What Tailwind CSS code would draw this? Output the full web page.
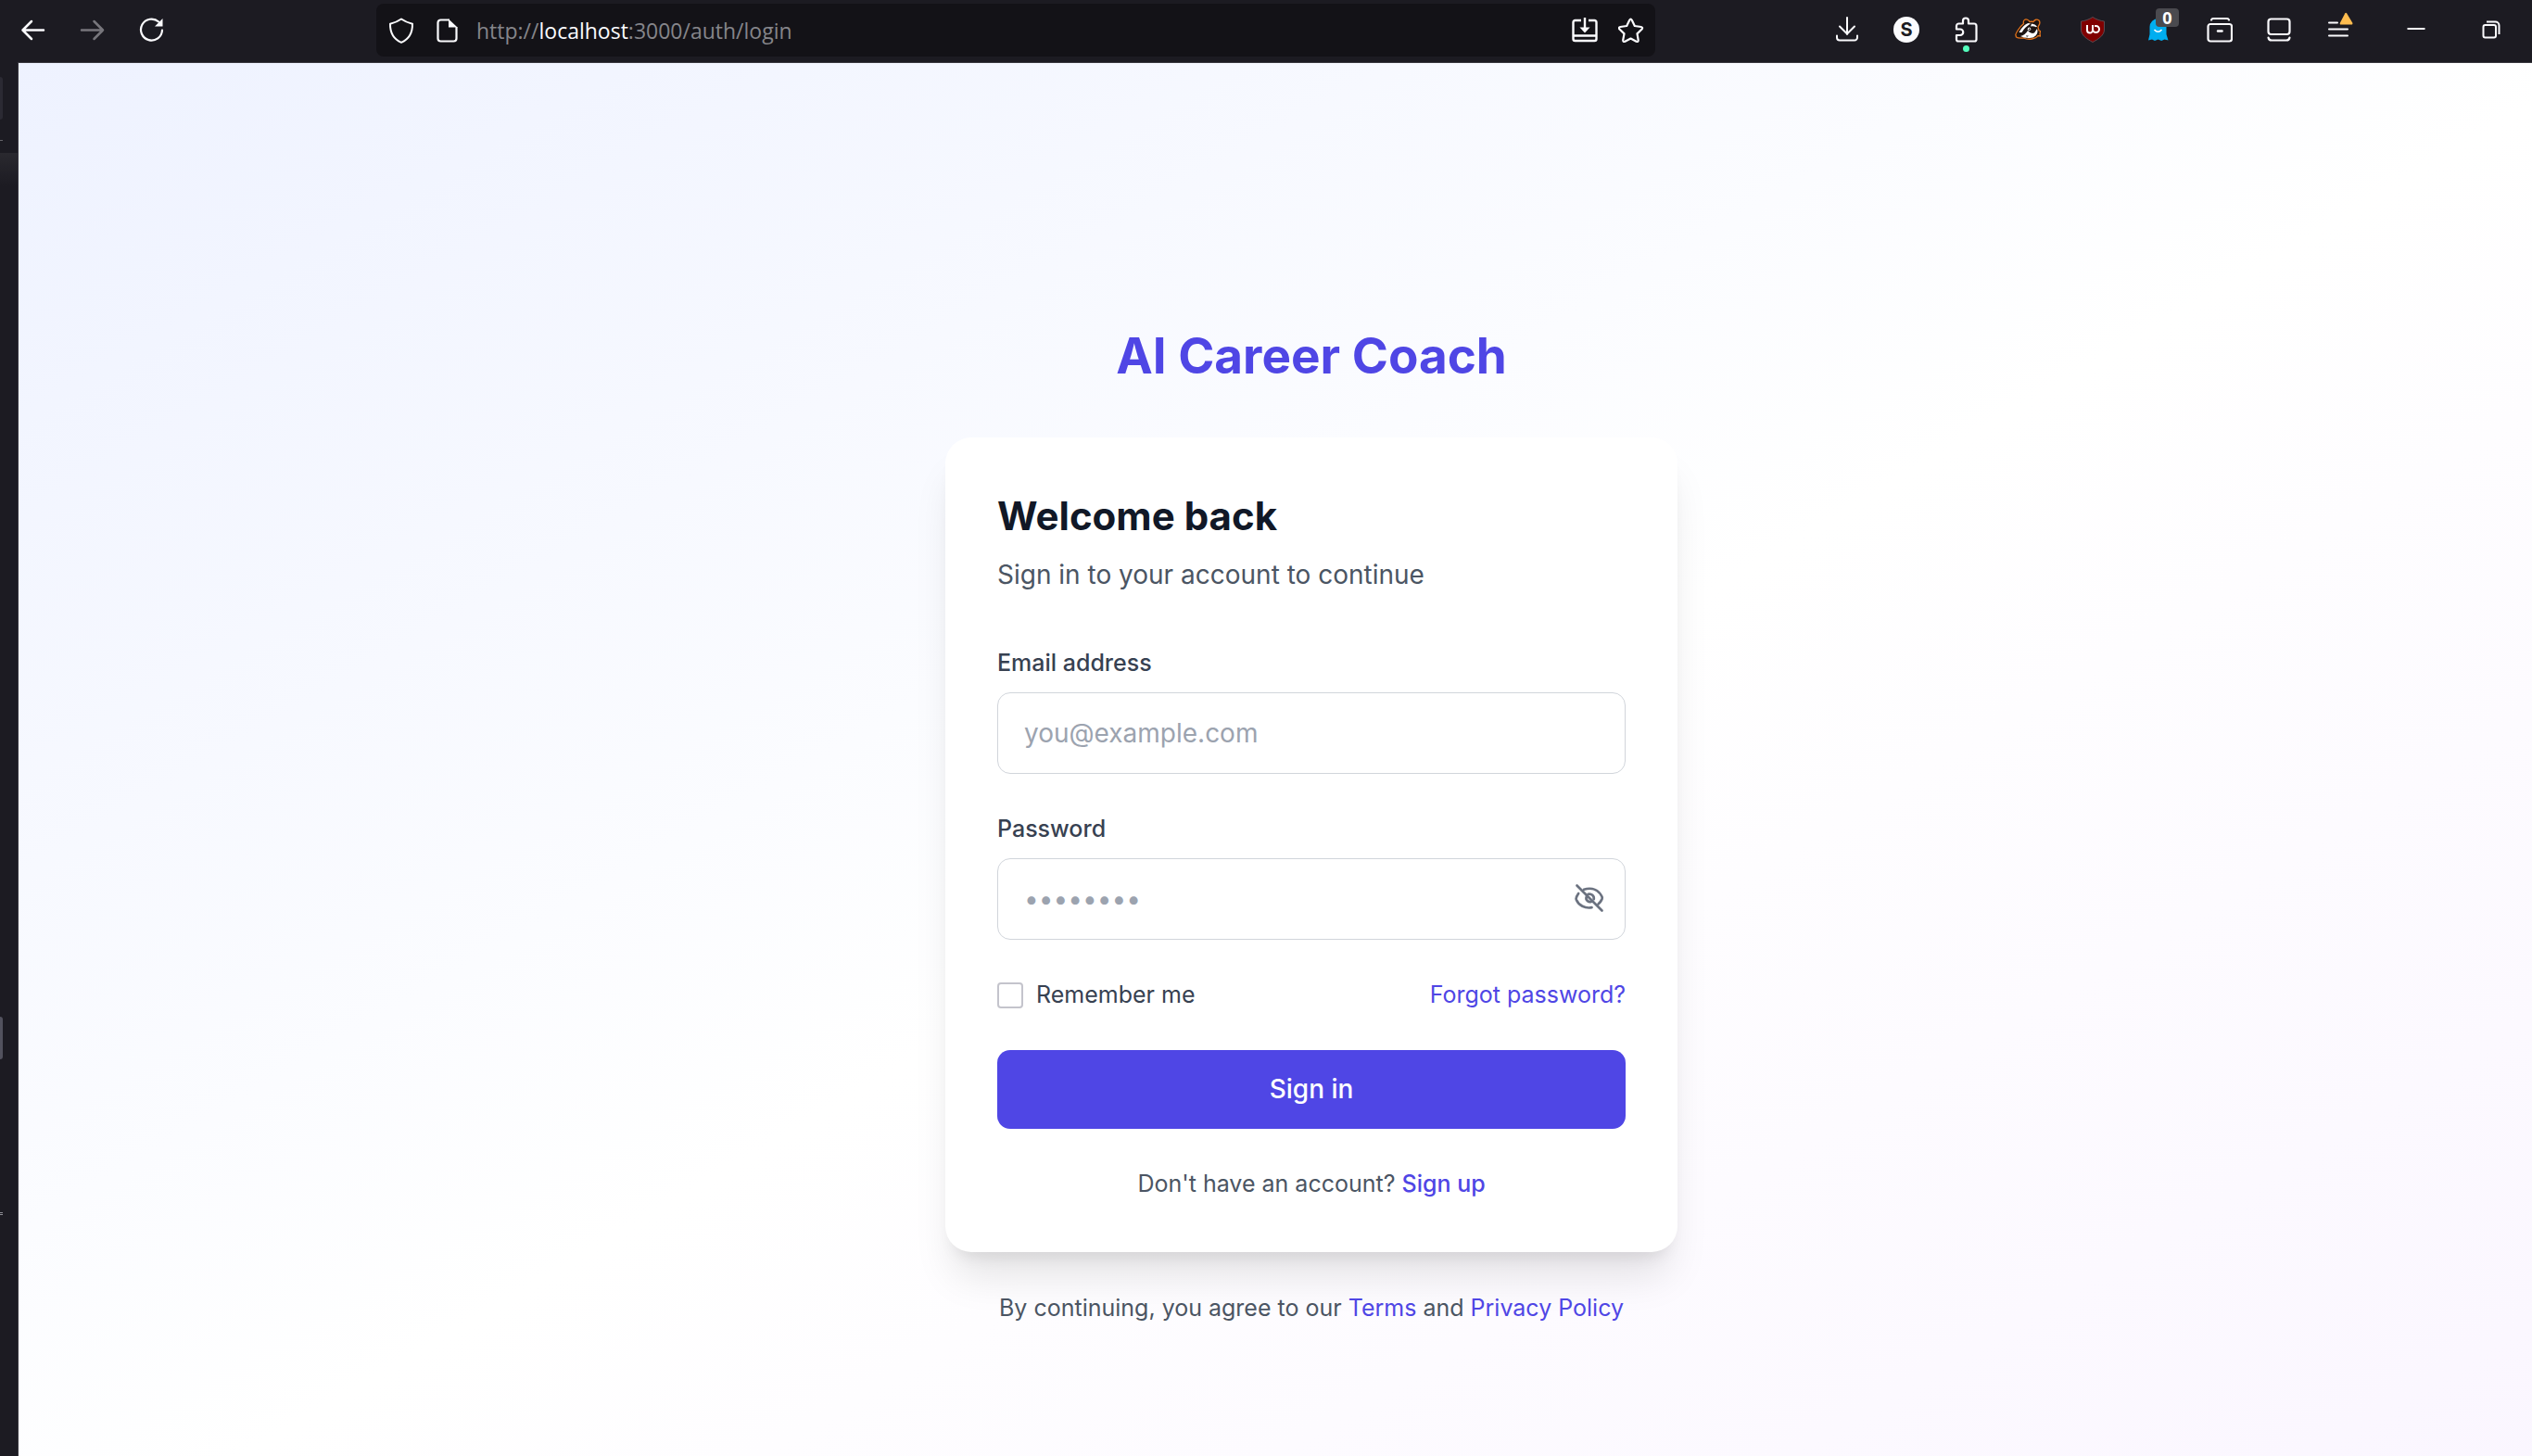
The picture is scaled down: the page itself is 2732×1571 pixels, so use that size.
<!DOCTYPE html>
<html lang="en">
<head>
<meta charset="utf-8">
<title>AI Career Coach - Sign in</title>
<script src="https://cdn.jsdelivr.net/npm/@tailwindcss/browser@4"></script>
</head>
<body class="flex h-screen flex-col overflow-hidden bg-[#1c1b22] font-['Inter',sans-serif]">

<header class="flex h-[67px] shrink-0 items-start pr-1 pl-1 text-[#fbfbfe]">
  <nav class="flex" aria-label="Browser navigation">
    <button class="flex h-16 w-16 items-center justify-center" aria-label="Back">
      <svg class="size-7" viewBox="0 0 28 28" fill="none" stroke="currentColor" stroke-width="2.500" stroke-linecap="round" stroke-linejoin="round"><path d="M25 14.500H3M12 5L2.500 14.500l9.500 9.500"/></svg>
    </button>
    <button class="flex h-16 w-16 items-center justify-center text-[#77767c]" aria-label="Forward">
      <svg class="size-7" viewBox="0 0 28 28" fill="none" stroke="currentColor" stroke-width="2.500" stroke-linecap="round" stroke-linejoin="round"><path d="M2 14.500h23M15.500 5l9.500 9.500-9.500 9.500"/></svg>
    </button>
    <button class="flex h-16 w-16 items-center justify-center" aria-label="Reload">
      <svg class="size-7" viewBox="0 0 28 28" fill="none" stroke="currentColor" stroke-width="2.200" stroke-linecap="round"><path d="M25 14.500a11.500 11.500 0 1 1-3.800-9"/><path d="M25.500 2v8.500H17z" fill="currentColor" stroke="none"/></svg>
    </button>
  </nav>

  <div class="mt-1 mr-[175px] ml-[210px] flex h-[57px] flex-1 items-center rounded-lg bg-[#131217] px-3">
    <svg class="ml-px size-7 shrink-0" viewBox="0 0 28 28" fill="none" stroke="currentColor" stroke-width="2" stroke-linejoin="round"><path d="M14 1.500c3.500 2.500 7 4 12 5.200C26.200 16 22.500 23 14 26.800 5.500 23 1.800 16 2 6.700 7 5.500 10.500 4 14 1.500z"/></svg>
    <svg class="ml-[22px] size-7 shrink-0" viewBox="0 0 28 28" fill="none" stroke="currentColor" stroke-width="2.200" stroke-linejoin="round"><path d="M16 2.500H6.500a3 3 0 0 0-3 3v17a3 3 0 0 0 3 3h14a3 3 0 0 0 3-3V10"/><path d="M15 1.500v9h9.500z" fill="currentColor" stroke="none"/></svg>
    <div role="textbox" aria-label="Address" class="ml-4 flex-1 pl-px font-['Open_Sans','Noto_Sans',sans-serif] text-[23px] leading-8 whitespace-nowrap text-[#85858a]">http://<span class="text-[#fbfbfe]">localhost</span>:3000/auth/login</div>
    <button aria-label="Install page">
      <svg class="size-7" viewBox="0 0 28 28" fill="none" stroke="currentColor" stroke-width="2.400" stroke-linejoin="round"><path d="M10 3H3.500A2 2 0 0 0 1.500 5v18a2 2 0 0 0 2 2h21a2 2 0 0 0 2-2V5a2 2 0 0 0-2-2H18M2 19.500h24M14 0v13"/><path d="M8.500 10.500h11L14 16.500z" fill="currentColor" stroke="none"/></svg>
    </button>
    <button class="ml-[22px]" aria-label="Bookmark">
      <svg class="size-7" viewBox="0 0 28 28" fill="none" stroke="currentColor" stroke-width="2.200" stroke-linejoin="round"><path d="M12.200 2.700q1.300-2.200 2.600 0l3 6.300 6.900 1q2.300.600.800 2.500l-5 4.900 1.200 6.900q0 2.300-2.200 1.500L13.500 22.500l-6.100 3.300q-2.200.800-2.200-1.500L6.500 17.400 1.500 12.500q-1.500-1.900.8-2.500l6.900-1z"/></svg>
    </button>
  </div>

  <div class="flex">
    <button class="flex h-16 w-16 items-center justify-center" aria-label="Downloads">
      <svg class="size-7" viewBox="0 0 28 28" fill="none" stroke="currentColor" stroke-width="2" stroke-linecap="round" stroke-linejoin="round"><path d="M14 1v18M6 10.500l8 8 8-8M3 20.500V22.500a3 3 0 0 0 3 3h16a3 3 0 0 0 3-3v-2"/></svg>
    </button>
    <button class="flex h-16 w-16 items-center justify-center" aria-label="Account">
      <span class="flex size-7 items-center justify-center rounded-full bg-[#fbfbfe] text-[20px] leading-7 font-bold text-[#1c1b22]">S</span>
    </button>
    <button class="relative flex h-16 w-16 items-center justify-center" aria-label="Extensions">
      <svg class="size-7" viewBox="0 0 28 28" fill="none" stroke="currentColor" stroke-width="2.200" stroke-linejoin="round"><path d="M11 7.500V4.500a3 3 0 0 1 6 0v3H23a2.500 2.500 0 0 1 2.500 2.500V24.500a2 2 0 0 1-2 2H6a2 2 0 0 1-2-2V20H8a3.200 3.200 0 0 0 0-6.500H4v-3.500a2.500 2.500 0 0 1 2.500-2.500z"/></svg>
      <span class="absolute bottom-2 size-[7px] rounded-full bg-[#54ffbd]"></span>
    </button>
    <button class="flex h-16 w-[70px] items-center justify-center" aria-label="Privacy Badger">
      <svg class="size-7" viewBox="0 0 28 28"><path d="M.800 19.500C1 18 5 11 9.500 7.500 8.500 4 11 2 14 3.500q1.500.800 2 2 2-.500 4 0c1.500-2.500 4-3 6-1.500q2 2.500-.500 6l-.500 1.500 1 3.500 1.500.500-.500 3 .500 2.500-2.500-.500q-2 3-6.500 3.500-5 .800-9-1-6 .500-8-1z" fill="#1d1512" stroke="#e2731c" stroke-width="1.300"/><path d="M4.500 17C7 12 11 8 14.500 7L17 7.500Q11 11 7.500 17z" fill="#fff"/><path d="M18 7.500q4 .500 6 3l-1 .800q-3-1.500-6-.800z" fill="#fff"/><path d="M6 21q5-1 8-6 3 4 7 2.500l3-4.500q1.500 4-1.500 7.500-3 3-8 2.500-5 0-8.500-2z" fill="#fff"/><path d="M12 20l3 .500-2 2z" fill="#777"/><circle cx="15.500" cy="13.200" r="1.700" fill="#fff"/><circle cx="15.700" cy="13.400" r=".8" fill="#1d1512"/></svg>
    </button>
    <button class="flex h-16 w-[70px] items-center justify-center" aria-label="uBlock Origin">
      <svg class="size-7" viewBox="0 0 28 28"><path d="M14 .500c4 2.500 8 4 12.500 4.500V14c0 6-6 10-12.500 13.500C7.500 24 1.500 20 1.500 14V5C6 4.500 10 3 14 .500z" fill="#800000" stroke="#5c4a50"/><path d="M8 9v5.500a3 3 0 0 0 6 0V9M14 13.500a3.500 3.500 0 1 0 3.500-3.500H16" fill="none" stroke="#fff" stroke-width="2"/></svg>
    </button>
    <button class="relative flex h-16 w-[70px] items-center justify-center" aria-label="Ghostery">
      <svg class="size-7" viewBox="0 0 28 28"><path d="M5.500 11a9 9 0 0 1 18 0v8l2 6.500-4-1-3.300 1.500-3.700-1.500-3.500 1.500-3-1.500-4 1 1.500-6.500z" fill="#00aef0"/><path d="M10.500 14q4 4.500 8 0" fill="none" stroke="#fff" stroke-width="1.600"/></svg>
      <span class="absolute top-[9px] right-3 flex h-5 w-[25px] items-center justify-center rounded-sm bg-[#4a4a4f] font-['Open_Sans',sans-serif] text-[18px] leading-5 font-bold text-white">0</span>
    </button>
    <button class="flex h-16 w-16 items-center justify-center" aria-label="Archive">
      <svg class="size-7" viewBox="0 0 28 28" fill="none" stroke="currentColor" stroke-width="2.200" stroke-linecap="round"><rect x="1.500" y="8" width="25.500" height="18.500" rx="2.500"/><path d="M5 3.500Q5.500 2 7 2h15q1.500 0 2 1.500"/><path d="M12 15.500h4.500" stroke-width="2.500"/></svg>
    </button>
    <button class="flex h-16 w-16 items-center justify-center" aria-label="Sidebar">
      <svg class="size-7" viewBox="0 0 28 28" fill="none" stroke="currentColor" stroke-width="2.200" stroke-linecap="round"><rect x="2.500" y="2.500" width="23" height="16.500" rx="3"/><path d="M2.500 22.500Q3 25.500 6 25.500h16q3 0 3.500-3"/></svg>
    </button>
    <button class="flex h-16 w-16 items-center justify-center" aria-label="Menu">
      <svg class="h-8 w-7 overflow-visible" viewBox="0 0 28 32" fill="none" stroke="currentColor" stroke-width="2" stroke-linecap="round"><path d="M4 8.500h9M4 15.500h20M4 22.500h20"/><path d="M21.200-1.500q1-1.500 2 0l6 10Q30 10.500 28 10.500H17Q15 10.500 16 8.500z" fill="#ffbd4f" stroke="none"/></svg>
    </button>
    <button class="ml-[11px] flex h-16 w-[81px] items-center justify-center" aria-label="Minimize">
      <svg class="size-5" viewBox="0 0 20 20" stroke="currentColor" stroke-width="2"><path d="M0.500 9h19"/></svg>
    </button>
    <button class="flex h-16 w-[81px] items-center justify-center" aria-label="Restore">
      <svg class="size-5" viewBox="0 0 20 20" fill="none" stroke="currentColor" stroke-width="2"><rect x="1.500" y="5" width="13.500" height="13.500" rx="2"/><path d="M5 1.500h9.500a4 4 0 0 1 4 4V15"/></svg>
    </button>
  </div>
</header>

<div class="flex min-h-0 flex-1">
  <aside class="flex w-5 shrink-0 flex-col border-r border-[#38373e]">
    <div class="mt-4 h-[46px] w-[3px] rounded-r-lg bg-[#2b2a33]"></div>
    <div class="mt-[22px] h-px w-[3px] bg-[#66656b]"></div>
    <div class="mt-[13px] h-9 bg-linear-to-b from-[#2a292f] to-[#1c1b22]"></div>
    <div class="mt-[896px] h-[46px] w-[3px] rounded-r-lg bg-[#52525e]"></div>
    <div class="mt-[165px] h-[3px] w-[3px] border-y border-[#8f8f96]"></div>
  </aside>

  <div class="min-w-0 flex-1 overflow-hidden border-t border-[#38373e]">
    <main class="flex h-[calc(100%+142px)] w-[calc(100%+78px)] flex-col items-center justify-center bg-linear-to-br from-[#eef2ff] via-white to-[#faf5ff]">
      <h1 class="text-[53px] leading-16 font-bold text-[#4f46e5]">AI Career Coach</h1>

      <section class="mt-14 w-[790px] rounded-[28px] bg-white p-14 shadow-[0_35px_44px_-9px_rgba(0,0,0,0.1),0_14px_18px_-11px_rgba(0,0,0,0.1)]">
        <h2 class="text-[42px] leading-[57px] font-bold text-[#111827]">Welcome back</h2>
        <p class="mt-[14px] text-[28px] leading-[43px] text-[#4b5563]">Sign in to your account to continue</p>

        <form class="mt-14 flex flex-col gap-[42px]">
          <div class="flex flex-col gap-[14px]">
            <label for="email" class="text-[25px] leading-[35px] font-medium text-[#374151]">Email address</label>
            <input id="email" type="email" placeholder="you@example.com" class="h-[88px] w-full rounded-[14px] border border-[#d1d5db] px-7 text-[28px] placeholder:text-[#9ca3af]">
          </div>
          <div class="flex flex-col gap-[14px]">
            <label for="password" class="text-[25px] leading-[35px] font-medium text-[#374151]">Password</label>
            <div class="relative">
              <input id="password" type="password" placeholder="••••••••" class="block h-[88px] w-full rounded-[14px] border border-[#d1d5db] pr-20 pl-7 text-[28px] placeholder:text-[#9ca3af]">
              <button type="button" aria-label="Show password" class="absolute inset-y-0 right-5 flex items-center text-[#6b7280]">
                <svg class="size-9" viewBox="0 0 36 36" fill="none" stroke="currentColor" stroke-width="2.700" stroke-linecap="round" stroke-linejoin="round"><path d="M3.500 3.500L30.500 30.500"/><path d="M11 7.800C20 5 27 8.500 30.500 15.500q.500 1.300 0 2.600-1.300 3-4 5.500"/><path d="M5.200 12Q3.500 14.500 2.800 16.500q-.400 1 0 2.200C5.500 25 12 28.500 19.500 27.200"/><path d="M15.500 12.800a4.800 4.800 0 0 1 6.200 5.500"/><path d="M14 15q-1.500 3 1 5.200 2 1.500 4.200.5"/></svg>
              </button>
            </div>
          </div>
          <div class="flex items-center justify-between text-[25px] leading-[35px]">
            <label class="flex items-center gap-[14px] text-[#374151]"><input type="checkbox" class="size-7 appearance-none rounded-sm border-2 border-[#c4c4cc] bg-white">Remember me</label>
            <a href="#" class="text-[#4f46e5]">Forgot password?</a>
          </div>
          <button type="submit" class="h-[85px] rounded-[14px] bg-[#4f46e5] text-[28px] leading-[43px] font-medium text-white">Sign in</button>
        </form>

        <p class="mt-[42px] text-center text-[25px] leading-[35px] text-[#4b5563]">Don't have an account? <a href="#" class="font-medium text-[#4f46e5]">Sign up</a></p>
      </section>

      <p class="mt-[42px] text-[25px] leading-9 text-[#4b5563]">By continuing, you agree to our <a href="#" class="text-[#4f46e5]">Terms</a> and <a href="#" class="text-[#4f46e5]">Privacy Policy</a></p>
    </main>
  </div>
</div>
</body>
</html>
